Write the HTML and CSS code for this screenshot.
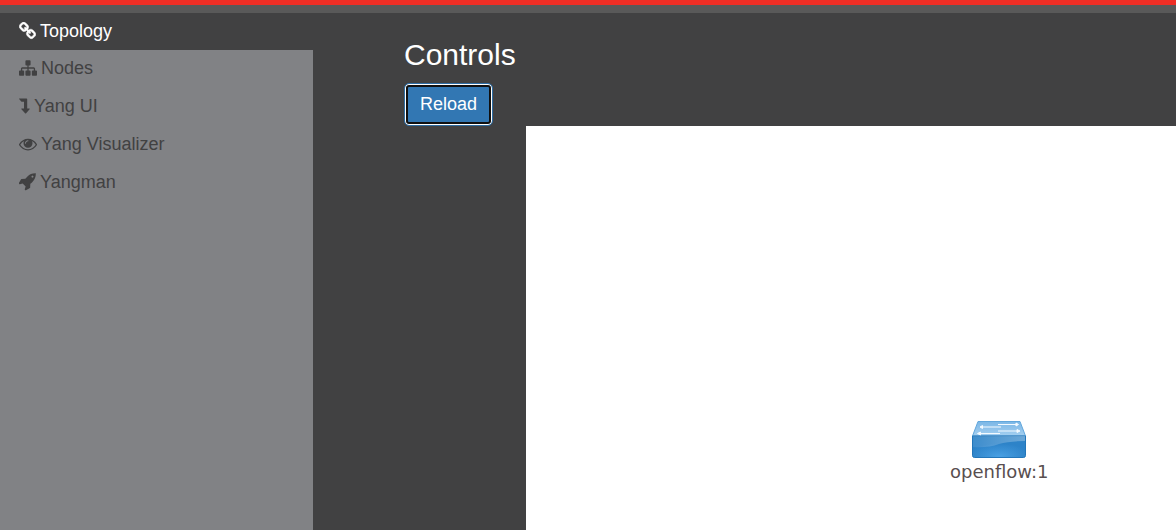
FILE: index.html
```html
<!DOCTYPE html>
<html lang="en">
<head>
<meta charset="utf-8">
<title>Topology</title>
<link rel="stylesheet" href="styles.css">
</head>
<body>
<header class="topbar"></header>
<div class="layout">
  <nav class="sidebar">
    <a class="item active" href="#topology"><svg class="icon medium link" viewBox="60 60 1672 1672"><path d="M1520 1216q0-40-28-68l-208-208q-28-28-68-28-42 0-72 32 3 3 19 18.500t21.500 21.500 15 19 13 25.500 3.500 27.500q0 40-28 68t-68 28q-15 0-27.500-3.500t-25.500-13-19-15-21.500-21.500-18.500-19q-33 31-33 73 0 40 28 68l206 207q27 27 68 27 40 0 68-26l147-146q28-28 28-67zm-703-705q0-40-28-68l-206-207q-28-28-68-28-39 0-68 27l-147 146q-28 28-28 67 0 40 28 68l208 208q27 27 68 27 42 0 72-31-3-3-19-18.500t-21.500-21.500-15-19-13-25.500-3.500-27.500q0-40 28-68t68-28q15 0 27.500 3.500t25.500 13 19 15 21.500 21.500 18.500 19q33-31 33-73zm895 705q0 120-85 203l-147 146q-83 83-203 83-121 0-204-85l-206-207q-83-83-83-203 0-123 88-209l-88-88q-86 88-208 88-120 0-204-84l-208-208q-84-84-84-204t85-203l147-146q83-83 203-83 121 0 204 85l206 207q83 83 83 203 0 123-88 209l88 88q86-88 208-88 120 0 204 84l208 208q84 84 84 204z"/></svg>Topology</a>
    <a class="item" href="#nodes"><svg class="icon wide" viewBox="0 0 1792 1792"><path d="M1792 1248v320q0 40-28 68t-68 28h-320q-40 0-68-28t-28-68v-320q0-40 28-68t68-28h96v-192h-512v192h96q40 0 68 28t28 68v320q0 40-28 68t-68 28h-320q-40 0-68-28t-28-68v-320q0-40 28-68t68-28h96v-192h-512v192h96q40 0 68 28t28 68v320q0 40-28 68t-68 28h-320q-40 0-68-28t-28-68v-320q0-40 28-68t68-28h96v-192q0-52 38-90t90-38h512v-192h-96q-40 0-68-28t-28-68v-320q0-40 28-68t68-28h320q40 0 68 28t28 68v320q0 40-28 68t-68 28h-96v192h512q52 0 90 38t38 90v192h96q40 0 68 28t28 68z"/></svg>Nodes</a>
    <a class="item" href="#yangui"><svg class="icon narrow" viewBox="0 0 11 18"><path d="M.3 1.500H7.500Q8.200 1.500 8.200 2.200V11.500H10.300Q11 11.500 10.600 12.200L7.100 16.200Q6.600 16.700 6.100 16.200L2.400 12.200Q2 11.500 2.700 11.500H5V4.800H2.800Q2.500 4.800 2.300 4.600L.1 2Q-.1 1.500 .3 1.500Z"/></svg>Yang UI</a>
    <a class="item" href="#visualizer"><svg class="icon wide" viewBox="0 0 1792 1792"><path d="M1664 960q-152-236-381-353 61 104 61 225 0 185-131.500 316.500t-316.500 131.500-316.500-131.500-131.500-316.500q0-121 61-225-229 117-381 353 133 205 333.500 326.500t434.500 121.500 434.500-121.500 333.500-326.500zm-720-384q0-20-14-34t-34-14q-125 0-214.500 89.500t-89.500 214.500q0 20 14 34t34 14 34-14 14-34q0-86 61-147t147-61q20 0 34-14t14-34zm848 384q0 34-20 69-140 230-376.500 368.500t-499.500 138.500-499.500-139-376.500-368q-20-35-20-69t20-69q140-229 376.500-368t499.500-139 499.500 139 376.500 368q20 35 20 69z"/></svg>Yang Visualizer</a>
    <a class="item" href="#yangman"><svg class="icon medium" viewBox="60 120 1620 1680"><path d="M1440 448q0-40-28-68t-68-28-68 28-28 68 28 68 68 28 68-28 28-68zm224-288q0 249-75.500 430.500t-253.500 360.500q-81 80-195 176l-20 379q-2 16-16 26l-384 224q-7 4-16 4-12 0-23-9l-64-64q-13-14-8-32l85-276-281-281-276 85q-3 1-9 1-14 0-23-9l-64-64q-17-19-5-39l224-384q10-14 26-16l379-20q96-114 176-195 188-187 358-258t431-71q14 0 24 9.500t10 22.500z"/></svg>Yangman</a>
  </nav>
  <main class="content">
    <h1 class="title">Controls</h1>
    <button class="reload" type="button">Reload</button>
    <section class="canvas" aria-label="Network topology">
      <div class="node">
        <svg class="switch" viewBox="0 0 54 38">
          <defs>
            <linearGradient id="front" x1="0" y1="0" x2="0" y2="1"><stop offset="0" stop-color="#2d83c7"/><stop offset=".5" stop-color="#2d83c9"/><stop offset="1" stop-color="#2a7fc4"/></linearGradient>
            <radialGradient id="glow" cx=".5" cy=".95" r=".6"><stop offset="0" stop-color="#49a0e3"/><stop offset="1" stop-color="#49a0e3" stop-opacity="0"/></radialGradient>
            <linearGradient id="lid" x1="0" y1="0" x2="0" y2="1"><stop offset="0" stop-color="#7cb7e6"/><stop offset="1" stop-color="#a4cff0"/></linearGradient>
            <linearGradient id="shine" x1="0" y1="0" x2="1" y2="0"><stop offset="0" stop-color="#fff" stop-opacity=".08"/><stop offset="1" stop-color="#fff" stop-opacity=".3"/></linearGradient>
          </defs>
          <path d="M6 1.500H48L53.500 16H.5Z" fill="url(#lid)" stroke="#62a7dc"/>
          <path d="M.5 16H53.500V35.500Q53.500 37.500 51.500 37.500H2.500Q.5 37.500 .5 35.500Z" fill="url(#front)"/>
          <path d="M.5 16H53.500V35.500Q53.500 37.500 51.500 37.500H2.500Q.5 37.500 .5 35.500Z" fill="url(#glow)" stroke="#2376b9"/>
          <path d="M1 16H53V21Q37 21 27 24Q16 28 1 27Z" fill="url(#shine)"/>
          <g stroke="#f4faff" fill="#f4faff">
            <path d="M26 4.500H44M11 7H29M26 11H46M9 13.500H28" fill="none"/>
            <path d="M44 3L46.500 4.500L44 6ZM10.500 5.500L8 7L10.500 8.500ZM45 9.500L48 11L45 12.500ZM8.500 12L5.500 13.500L8.500 15Z"/>
          </g>
        </svg>
        <span class="label">openflow:1</span>
      </div>
    </section>
  </main>
</div>
</body>
</html>
```
FILE: styles.css
```css
* {
  box-sizing: border-box;
}

body {
  margin: 0;
  min-height: 100vh;
  display: flex;
  flex-direction: column;
  background: #414142;
  color: #fff;
  font-family: "Liberation Sans", Arial, sans-serif;
  font-size: 18px;
}

.topbar {
  height: 13px;
  border-top: 5px solid #ef2e25;
  background: #595959;
}

.layout {
  flex: 1;
  display: flex;
}

.sidebar {
  flex: 0 0 313px;
  background: #818285;
}

.item {
  display: flex;
  align-items: center;
  gap: 4px;
  padding: 5px 19px 7px;
  line-height: 26px;
  color: #414142;
  text-decoration: none;
}

.item.active {
  padding-bottom: 6px;
  background: #414142;
  color: #fff;
}

.icon {
  height: 18px;
  fill: currentColor;
}

.wide {
  width: 18px;
}

.medium {
  width: 17px;
}

.narrow {
  width: 11px;
}

.link {
  stroke: currentColor;
  stroke-width: 50;
}

.content {
  flex: 1;
  min-width: 0;
  display: flex;
  flex-direction: column;
  align-items: flex-start;
  padding: 25px 0 0 91px;
}

.title {
  margin: 0 0 11px;
  font-size: 30px;
  font-weight: 400;
  line-height: 34px;
}

.reload {
  padding: 8px 15px;
  border: 1px solid #2e6da4;
  border-radius: 5px;
  background: #3277b3;
  box-shadow: inset 0 0 0 1px #fff, inset 0 0 0 3px #101010;
  color: #fff;
  font: inherit;
  line-height: 25px;
}

.canvas {
  flex: 1;
  align-self: stretch;
  position: relative;
  margin-left: 122px;
  background: #fff;
}

.node {
  position: absolute;
  left: 424px;
  top: 294px;
  display: flex;
  flex-direction: column;
  align-items: center;
  gap: 4px;
}

.switch {
  width: 54px;
  height: 38px;
}

.label {
  color: #594f4f;
  font-family: "DejaVu Sans", sans-serif;
  font-size: 18px;
  line-height: 20px;
}
```
